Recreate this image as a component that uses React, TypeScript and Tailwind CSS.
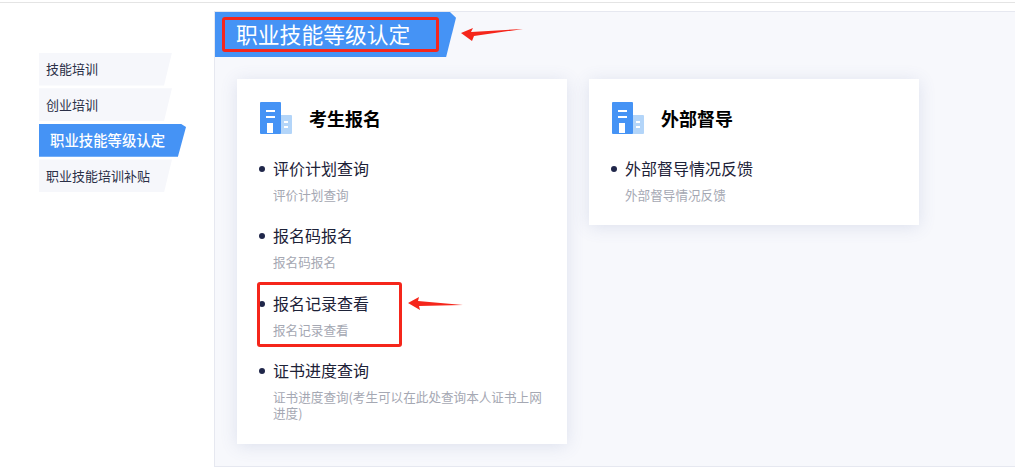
import React from 'react';

const font = { fontFamily: '"Noto Sans CJK SC", "Liberation Sans", sans-serif' };

const BuildingIcon = () => (
  <svg width="33" height="33" viewBox="0 0 33 33" className="shrink-0">
    <rect x="20" y="13" width="12" height="19" rx="1" fill="#b3d5f9" />
    <rect x="0" y="0" width="21" height="32" rx="1" fill="#4593f5" />
    <rect x="6" y="8" width="9" height="2" fill="#ffffff" />
    <rect x="6" y="14" width="9" height="2" fill="#ffffff" />
    <rect x="7" y="21" width="6" height="10" fill="#ffffff" />
    <rect x="24" y="19" width="4" height="2" fill="#ffffff" />
    <rect x="24" y="24" width="4" height="2" fill="#ffffff" />
  </svg>
);

const SideItem = ({ label, active }: { label: string; active?: boolean }) => {
  if (active) {
    return (
      <div className="h-[33px] w-[147px] flex items-center pl-[11px] bg-[#4593f5] text-white text-[14.4px] font-medium [clip-path:polygon(0_0,96.5%_0,100%_10%,94.5%_100%,0_100%)]">
        {label}
      </div>
    );
  }
  return (
    <div className="h-[33px] w-[133px] flex items-center pl-[7px] bg-[#f6f7fb] text-[#2b3048] text-[13px] [clip-path:polygon(0_0,100%_0,94%_100%,0_100%)]">
      {label}
    </div>
  );
};

const ListItem = ({ title, desc, last }: { title: string; desc: string; last?: boolean }) => (
  <li className={`relative pl-[13px] ${last ? '' : 'mb-[20.4px]'}`}>
    <span className="absolute left-[-1px] top-[10px] w-[6px] h-[6px] rounded-full bg-[#20274a]" />
    <div className="text-[16px] leading-[24px] text-[#1d2238]">{title}</div>
    <div className="mt-[7px] text-[12.6px] leading-[16px] text-[#a5a8b3]">{desc}</div>
  </li>
);

const Card = ({ title, height, children }: { title: string; height: string; children: React.ReactNode }) => (
  <div className={`w-[330px] ${height} bg-white shadow-[0_2px_16px_rgba(90,105,160,0.16)] pt-[23px] pl-[23px] pr-[24px]`}>
    <div className="flex items-center gap-[16px] h-[33px]">
      <BuildingIcon />
      <span className="text-[18px] font-bold text-black">{title}</span>
    </div>
    <ul className="mt-[21px] pl-0">{children}</ul>
  </div>
);

export default function App() {
  return (
    <div className="relative w-[1015px] h-[475px] bg-white overflow-hidden" style={font}>
      <div className="mt-[2px] h-px bg-[#e4e4e4]" />
      <div className="flex">
        <aside className="w-[214px] shrink-0 pt-[49.6px] pl-[39px] flex flex-col gap-[2.6px]">
          <SideItem label="技能培训" />
          <SideItem label="创业培训" />
          <SideItem label="职业技能等级认定" active />
          <SideItem label="职业技能培训补贴" />
        </aside>
        <main className="mt-[8px] w-[801px] h-[456px] bg-[#f7f8fc] border-l border-t border-b border-[#e6e8f0]">
          <div className="w-[241px] h-[45px] flex items-center pl-[21px] bg-[#4593f5] text-white text-[21.8px] [clip-path:polygon(0_0,97.5%_0,100%_13%,95.9%_100%,0_100%)]">
            职业技能等级认定
          </div>
          <div className="flex items-start gap-[22px] pt-[22px] pl-[22px]">
            <Card title="考生报名" height="h-[365px]">
              <ListItem title="评价计划查询" desc="评价计划查询" />
              <ListItem title="报名码报名" desc="报名码报名" />
              <ListItem title="报名记录查看" desc="报名记录查看" />
              <ListItem
                title="证书进度查询"
                desc="证书进度查询(考生可以在此处查询本人证书上网进度)"
                last
              />
            </Card>
            <Card title="外部督导" height="h-[146px]">
              <ListItem title="外部督导情况反馈" desc="外部督导情况反馈" last />
            </Card>
          </div>
        </main>
      </div>

      {/* annotations drawn on top of the screenshot */}
      <div className="absolute left-[222px] top-[17px] w-[217px] h-[35px] border-[3px] border-[#f5261b] rounded-[3px]" />
      <div className="absolute left-[257px] top-[282px] w-[145px] h-[65px] border-[3px] border-[#f5261b] rounded-[3px]" />
      <svg width="64" height="20" viewBox="0 0 64 20" className="absolute left-[460px] top-[24px]">
        <path d="M1 9 L13 4 L11 8 L63 5 L14 12 L12 17 Z" fill="#f5261b" />
      </svg>
      <svg width="56" height="20" viewBox="0 0 56 20" className="absolute left-[408px] top-[294px]">
        <path d="M0 9 L11 3 L10 7 L55 11 L11 12 L12 16 Z" fill="#f5261b" />
      </svg>
    </div>
  );
}
